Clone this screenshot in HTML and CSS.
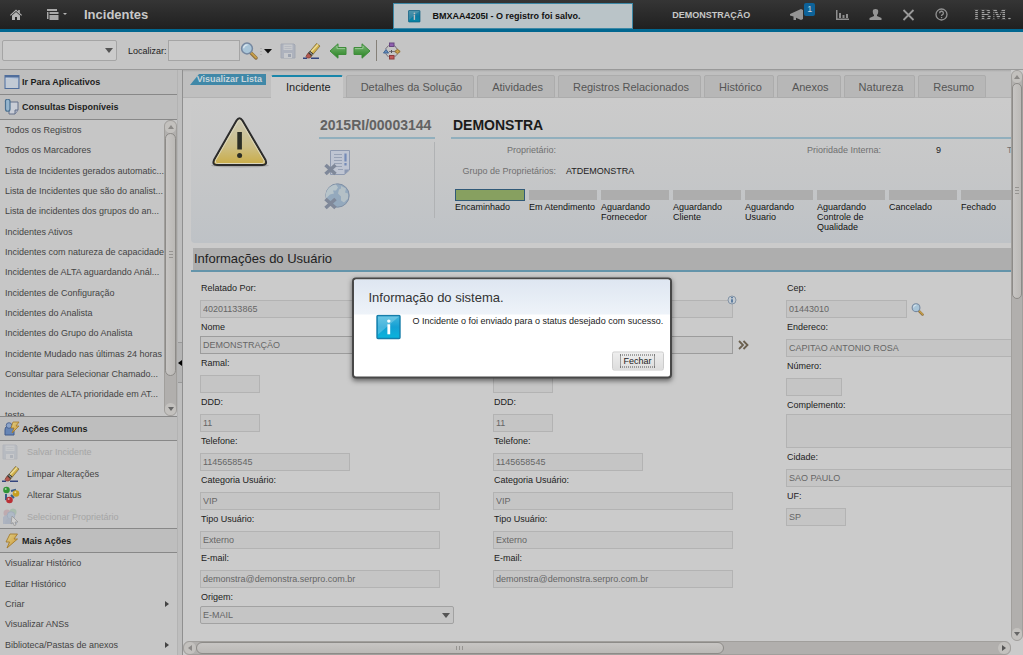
FILE: index.html
```html
<!DOCTYPE html>
<html lang="pt-BR">
<head>
<meta charset="utf-8">
<title>Incidentes</title>
<link rel="stylesheet" href="styles.css">
</head>
<body>
<svg class="defs" aria-hidden="true">
  <defs>
    <linearGradient id="gBlue" x1="0" y1="0" x2="1" y2="1"><stop offset="0" stop-color="#d3dce8"/><stop offset="1" stop-color="#8da6c8"/></linearGradient>
    <linearGradient id="gGreen" x1="0" y1="0" x2="0" y2="1"><stop offset="0" stop-color="#7cb878"/><stop offset="1" stop-color="#27821f"/></linearGradient>
    <linearGradient id="gWarn" x1="0" y1="0" x2="0" y2="1"><stop offset="0" stop-color="#cbc9b8"/><stop offset="0.6" stop-color="#cdbf86"/><stop offset="1" stop-color="#c9ab45"/></linearGradient>
    <linearGradient id="gInfo" x1="0" y1="0" x2="0" y2="1"><stop offset="0" stop-color="#45b8dd"/><stop offset="0.5" stop-color="#14a0d4"/><stop offset="1" stop-color="#08b5dd"/></linearGradient>
    <linearGradient id="gBolt" x1="0" y1="0" x2="1" y2="1"><stop offset="0" stop-color="#ded08a"/><stop offset="1" stop-color="#cf9630"/></linearGradient>
  </defs>
  <symbol id="i-search" viewBox="0 0 18 18">
    <path d="M10.5 10.5l5.5 5.5" stroke="#8c6f3f" stroke-width="3.4" stroke-linecap="round"/>
    <path d="M11 10.6l5 5" stroke="#c9a048" stroke-width="1.8" stroke-linecap="round"/>
    <circle cx="7" cy="6.5" r="5.4" fill="#a9c5d8" stroke="#7688a0" stroke-width="1.5"/>
    <path d="M3.6 6.2a3.6 3.6 0 0 1 4-3.3" stroke="#d9e6ee" stroke-width="1.4" fill="none"/>
  </symbol>
  <symbol id="i-save" viewBox="0 0 16 16">
    <path d="M1 1h13l1 1v13H1z" fill="#a3abba" stroke="#969dab"/>
    <path d="M3.5 1.5h9v5.5h-9z" fill="#c8cbd0"/><path d="M4.5 3.5h7M4.5 5.5h7" stroke="#b0b5be"/>
    <path d="M4 10h8v5H4z" fill="#c9cbd0"/><path d="M8 11h3v3H8z" fill="#8c95a8"/>
  </symbol>
  <symbol id="i-eraser" viewBox="0 0 18 18">
    <path d="M0 16.3h4M8 16.3h8" stroke="#33447d" stroke-width="1.4"/>
    <path d="M3.5 13.5L13.500 1.500l3.500 2.500L7 16z" fill="#d1b04a" stroke="#756330" stroke-width=".7"/>
    <path d="M6 12L15 2.600" stroke="#eadc9b" stroke-width="1.400"/>
    <path d="M7 8.800l3.400 3L8.500 14 5 11z" fill="#333"/><path d="M6.400 10l3.200 2.800" stroke="#c5c5c5"/>
    <path d="M5 11.200l3.200 2.800L6.500 16H4.200L3 14.600z" fill="#b65a52" stroke="#7d3b38" stroke-width=".7"/>
  </symbol>
  <symbol id="i-arrow" viewBox="0 0 18 18">
    <path d="M1 5.5h8V1.8L17 9l-8 7.2v-3.7H1z" fill="url(#gGreen)" stroke="#3f8c3b" stroke-linejoin="round"/>
    <path d="M2 6.6h8V4" stroke="#a6cfa2" stroke-width=".8" fill="none"/>
  </symbol>
  <symbol id="i-bolt" viewBox="0 0 14 16">
    <path d="M5 1h7.500L9 6h3.500L2 15l2.500-6H1z" fill="url(#gBolt)" stroke="#a37a2c" stroke-width=".9" stroke-linejoin="round"/>
  </symbol>
  <symbol id="i-info" viewBox="0 0 26 26">
    <rect x="1" y="1" width="23" height="23" rx="1" fill="url(#gInfo)" stroke="#167daa" stroke-width="1.4"/>
    <path d="M2 2h21L2 20z" fill="#fff" opacity=".22"/>
    <rect x="11.400" y="9.800" width="2.800" height="10" fill="#fff"/><circle cx="12.800" cy="6.600" r="1.700" fill="#fff"/>
  </symbol>
</svg>

<header class="topbar">
  <button class="icon-btn" aria-label="Início"><svg width="12" height="12" viewBox="0 0 12 12"><path d="M0 6l6-5.500L8.200 2.500V1h1.600v3L12 6l-.7.700L6 2 .7 6.700z" fill="#b5b5b5"/><path d="M2 6.500l4-3.600 4 3.600V11H7V8H5v3H2z" fill="#b5b5b5"/></svg></button>
  <button class="icon-btn menu-btn" aria-label="Ir para"><svg width="21" height="12" viewBox="0 0 21 12"><path d="M0 0h10v2H0zM0 3h1.500v7H0zM2.500 3h9v2h-9zM2.500 6h9v5h-9z" fill="#a9a9a9"/><path d="M16 4h4l-2 2z" fill="#b5b5b5"/></svg></button>
  <h1 class="app-title">Incidentes</h1>
  <div class="topbar-right">
    <span class="user-name">DEMONSTRAÇÃO</span>
    <button class="icon-btn bulletin" aria-label="Boletins"><svg width="14" height="12" viewBox="0 0 14 12"><path d="M0 5l11-5 2 1v9l-2 1-5-2.300V11H3.500V7.500L0 6.500z" fill="#949494"/></svg><span class="badge">1</span></button>
    <button class="icon-btn" aria-label="Relatórios"><svg width="13" height="12" viewBox="0 0 13 12"><path d="M0 1h1.500v8.500H13V11H0z" fill="#8e8e8e"/><path d="M3 4h2v5H3zM6.500 6h2v3h-2zM10 5h2v4h-2z" fill="#8e8e8e"/></svg></button>
    <button class="icon-btn" aria-label="Perfil"><svg width="13" height="12" viewBox="0 0 13 12"><path d="M6.500 0a2.700 2.700 0 0 1 2.700 3C9 5 8.500 5.500 8 6v1l4.500 2v2H.5V9L5 7V6C4.500 5.500 4 5 3.800 3A2.700 2.700 0 0 1 6.500 0z" fill="#949494"/></svg></button>
    <button class="icon-btn" aria-label="Sair"><svg width="13" height="12" viewBox="0 0 13 12"><path d="M1.500 1l10 10M11.500 1l-10 10" stroke="#9a9a9a" stroke-width="1.800"/></svg></button>
    <button class="icon-btn" aria-label="Ajuda"><svg width="13" height="13" viewBox="0 0 13 13"><circle cx="6.500" cy="6.500" r="5.500" fill="none" stroke="#929292" stroke-width="1.300"/><path d="M4.600 5.200a1.900 1.900 0 1 1 2.600 1.700q-.7.400-.7 1.100" fill="none" stroke="#929292" stroke-width="1.300"/><path d="M5.900 9h1.300v1.200H5.900z" fill="#929292"/></svg></button>
    <span class="brand">IBM.</span>
  </div>
  <div class="notice" role="status"><svg width="13" height="13"><use href="#i-info"/></svg><span>BMXAA4205I - O registro foi salvo.</span></div>
</header>

<div class="toolbar">
  <select class="query-select" aria-label="Consulta"><option></option></select>
  <label class="find-label" for="find">Localizar:</label>
  <input class="find-input" id="find" type="text">
  <button class="icon-btn" aria-label="Buscar"><svg width="18" height="18"><use href="#i-search"/></svg></button>
  <button class="icon-btn drop" aria-label="Opções de busca"><svg width="12" height="8" viewBox="0 0 12 8"><path d="M1 1v1M1 4v1M1 7v1" stroke="#999"/><path d="M4 2h8L8 6.500z" fill="#111"/></svg></button>
  <button class="icon-btn save" aria-label="Salvar"><svg width="16" height="16"><use href="#i-save"/></svg></button>
  <button class="icon-btn clear" aria-label="Limpar"><svg width="18" height="18"><use href="#i-eraser"/></svg></button>
  <button class="icon-btn back" aria-label="Anterior"><svg width="18" height="18"><use href="#i-arrow"/></svg></button>
  <button class="icon-btn next" aria-label="Próximo"><svg width="18" height="18"><use href="#i-arrow"/></svg></button>
  <span class="divider"></span>
  <button class="icon-btn" aria-label="Rotear fluxo"><svg width="18" height="18" viewBox="0 0 18 18"><path d="M5.500 3.500L2.500 7M11.500 3.500l3 4M2.500 11.500l3 3.500M14.500 12l-3 3M6 9.500h6" fill="none" stroke="#77707a"/><path d="M8.500 8v3" stroke="#555"/><rect x="6.500" y="1" width="4.500" height="3.500" fill="#9060b0" stroke="#674680"/><path d="M3 7.500l2.500 3.500H.5z" fill="#6690bd" stroke="#3f6292"/><path d="M14.500 7.300l2.700 2.200-2.700 2.200-2.700-2.200z" fill="#caa04a" stroke="#8b6c2c"/><rect x="6.500" y="13.500" width="4.500" height="3.500" fill="#c15a5a" stroke="#8c3b3b"/></svg></button>
</div>

<div class="workspace">
  <nav class="sidebar">
    <h2 class="side-head"><svg width="16" height="16" viewBox="0 0 16 16"><rect x="1" y="1.500" width="14" height="13" fill="url(#gBlue)" stroke="#506e9c"/><path d="M1 2.500h14" stroke="#506e9c" stroke-width="2"/><path d="M2 5h12v9H2z" fill="#c1cad5"/></svg>Ir Para Aplicativos</h2>
    <h2 class="side-head"><svg width="16" height="16" viewBox="0 0 16 16"><path d="M5 3h9v8l-3 4H5z" fill="#c9cdd6" stroke="#65708a"/><path d="M14 11h-3v4" fill="#aab2c4" stroke="#65708a"/><path d="M1.500 3a2 2 0 0 1 4.500-1v8a2.200 2.200 0 0 1-4.500 0z" fill="#96b5cd" stroke="#4c7191" stroke-width="1.200"/></svg>Consultas Disponíveis</h2>
    <div class="query-pane">
      <ul class="queries">
        <li><a href="#">Todos os Registros</a></li>
        <li><a href="#">Todos os Marcadores</a></li>
        <li><a href="#">Lista de Incidentes gerados automatic...</a></li>
        <li><a href="#">Lista de Incidentes que são do analist...</a></li>
        <li><a href="#">Lista de incidentes dos grupos do an...</a></li>
        <li><a href="#">Incidentes Ativos</a></li>
        <li><a href="#">Incidentes com natureza de capacidade</a></li>
        <li><a href="#">Incidentes de ALTA aguardando Anál...</a></li>
        <li><a href="#">Incidentes de Configuração</a></li>
        <li><a href="#">Incidentes do Analista</a></li>
        <li><a href="#">Incidentes do Grupo do Analista</a></li>
        <li><a href="#">Incidente Mudado nas últimas 24 horas</a></li>
        <li><a href="#">Consultar para Selecionar Chamado...</a></li>
        <li><a href="#">Incidentes de ALTA prioridade em AT...</a></li>
        <li><a href="#">teste</a></li>
      </ul>
      <div class="vscroll">
        <span class="cap up"></span><span class="thumb side-thumb"><i class="grip"></i></span><span class="track"></span><span class="cap down"></span>
      </div>
    </div>
    <h2 class="side-head ruled"><svg width="16" height="16" viewBox="0 0 16 16"><path d="M1 9c0-3 2-4 3-4h3c2 0 3 2 3 4v5H1z" fill="#6685b5" stroke="#415b8a"/><circle cx="5" cy="4.500" r="2.800" fill="#8ba3c8" stroke="#415b8a" stroke-width=".8"/><path d="M9 1h6l-3 4h3l-7 7 2-5H7z" fill="url(#gBolt)" stroke="#a37a2c" stroke-width=".8"/></svg>Ações Comuns</h2>
    <ul class="actions">
      <li class="off"><svg class="faded" width="16" height="16"><use href="#i-save"/></svg><span>Salvar Incidente</span></li>
      <li><svg width="18" height="18"><use href="#i-eraser"/></svg><a href="#">Limpar Alterações</a></li>
      <li><svg width="18" height="18" viewBox="0 0 18 18"><path d="M4 8v5l4-1M9 5l4-1 1 5M9 9l3 3" stroke="#385d88" stroke-width="2" fill="none"/><circle cx="4.500" cy="4" r="3.300" fill="#2f9435"/><circle cx="14" cy="7.500" r="3.300" fill="#c69e20"/><circle cx="7.500" cy="14" r="3.300" fill="#ba2f35"/><circle cx="3.700" cy="3" r="1" fill="#a9d1a8"/><circle cx="13.300" cy="6.300" r="1" fill="#e8dba0"/><circle cx="6.600" cy="13" r="1" fill="#e0a3a3"/></svg><a href="#">Alterar Status</a></li>
      <li class="off"><svg class="faded" width="18" height="18" viewBox="0 0 18 18"><circle cx="5" cy="5" r="3.500" fill="#b5858f"/><circle cx="11" cy="4" r="3.500" fill="#7fae8c"/><path d="M1 16V9q4-4 8 0v7z" fill="#8b9bb9"/><circle cx="9" cy="7.500" r="3.800" fill="#8ea7c8" stroke="#6e88ad"/><path d="M3 16q0-6 6-6t6 6z" fill="#8193b4"/><path d="M10 8l6 6h-3l1 3-2 .5-1-3-2 1.500z" fill="#ddd" stroke="#555" stroke-width=".8"/></svg><span>Selecionar Proprietário</span></li>
    </ul>
    <h2 class="side-head ruled"><svg width="16" height="16"><use href="#i-bolt"/></svg>Mais Ações</h2>
    <ul class="more">
      <li><a href="#">Visualizar Histórico</a></li>
      <li><a href="#">Editar Histórico</a></li>
      <li class="sub"><a href="#">Criar</a></li>
      <li><a href="#">Visualizar ANSs</a></li>
      <li class="sub"><a href="#">Biblioteca/Pastas de anexos</a></li>
    </ul>
  </nav>

  <div class="splitter"><button class="collapse" aria-label="Recolher"></button></div>

  <main class="main">
    <div class="view">
      <div class="tabs">
        <a class="list-link" href="#">Visualizar Lista</a>
        <button class="tab active">Incidente</button>
        <button class="tab">Detalhes da Solução</button>
        <button class="tab">Atividades</button>
        <button class="tab">Registros Relacionados</button>
        <button class="tab">Histórico</button>
        <button class="tab">Anexos</button>
        <button class="tab">Natureza</button>
        <button class="tab">Resumo</button>
      </div>
      <div class="content">
        <section class="summary">
          <svg class="warning" width="58" height="52" viewBox="0 0 58 52"><ellipse cx="29" cy="48.500" rx="29" ry="2" fill="#999" opacity=".7"/><path d="M25.500 3.500Q28.500-1 31.500 3.500L54.500 43q2 5-3 5H6q-5 0-3-5z" fill="url(#gWarn)" stroke="#2c2c2c" stroke-width="2"/><path d="M27 4.500Q28.500 2 30 4.500L53 43.500q1 3-2 3H6.500q-3 0-2-3z" fill="none" stroke="#dbd6bd" stroke-width="1"/><path d="M26.300 15h4.600v17.500h-4.600z" fill="#2b2e26"/><circle cx="28.600" cy="38.500" r="2.500" fill="#2b2e26"/></svg>
          <div class="ticket">
            <h2 class="ticket-id">2015RI/00003144</h2>
            <div class="ticket-icons">
              <svg width="28" height="28" viewBox="0 0 28 28"><path d="M6.500 2.500h19V22l-5 4.500h-14z" fill="#bfc5d2" stroke="#8f9ab0"/><path d="M10 6.500h8M10 9.500h8M10 12.500h8M10 15.500h8M11 18.500h7M14 21.500h5" stroke="#98a2b5"/><path d="M21.500 5.500v8M21.500 15v2.500" stroke="#758bb8" stroke-width="2.200"/><path d="M25.500 21.500h-5v5z" fill="#8b98b1"/><path d="M1.500 17l10 9M11.500 17l-10 9" stroke="#7f8899" stroke-width="3.600"/></svg>
              <svg width="28" height="28" viewBox="0 0 28 28"><circle cx="13.500" cy="13.500" r="11.700" fill="#94a9bd" stroke="#8090a5"/><path d="M4 7q3-4 8-4.500l2 3-2 3-3 0 1 3-4 1-4 4q-1-6 2-9.500z" fill="#b7c4ca"/><path d="M17 4l5 2.500-1 4 3 1v5l-4 4-3-2v-4l-3-3 1-4 2-1z" fill="#b4c0c6"/><path d="M1.500 17l10 9M11.500 17l-10 9" stroke="#7f8899" stroke-width="3.600"/></svg>
            </div>
          </div>
          <div class="details">
            <h2 class="ticket-title">DEMONSTRA</h2>
            <dl class="facts">
              <dt>Proprietário:</dt><dd></dd><dt class="priority">Prioridade Interna:</dt><dd class="num">9</dd><dt class="type">Tipo:</dt>
              <dt class="second">Grupo de Proprietários:</dt><dd>ATDEMONSTRA</dd>
            </dl>
            <ol class="steps">
              <li class="current">Encaminhado</li>
              <li>Em Atendimento</li>
              <li>Aguardando Fornecedor</li>
              <li>Aguardando Cliente</li>
              <li>Aguardando Usuario</li>
              <li>Aguardando Controle de Qualidade</li>
              <li>Cancelado</li>
              <li>Fechado</li>
            </ol>
          </div>
        </section>

        <h2 class="section-title"><span>Informações do Usuário</span></h2>
        <form class="form">
          <div class="col">
            <div class="field"><label for="a1">Relatado Por:</label><input id="a1" class="w-l" value="40201133865" readonly></div>
            <div class="field tight"><label for="a2">Nome</label><input id="a2" class="w-l strong" value="DEMONSTRAÇÃO" readonly></div>
            <div class="field"><label for="a3">Ramal:</label><input id="a3" class="w-s" readonly></div>
            <div class="field"><label for="a4">DDD:</label><input id="a4" class="w-s" value="11" readonly></div>
            <div class="field"><label for="a5">Telefone:</label><input id="a5" class="w-m" value="1145658545" readonly></div>
            <div class="field"><label for="a6">Categoria Usuário:</label><input id="a6" class="w-l" value="VIP" readonly></div>
            <div class="field"><label for="a7">Tipo Usuário:</label><input id="a7" class="w-l" value="Externo" readonly></div>
            <div class="field"><label for="a8">E-mail:</label><input id="a8" class="w-l" value="demonstra@demonstra.serpro.com.br" readonly></div>
            <div class="field tight"><label for="a9">Origem:</label><select id="a9" class="origin"><option>E-MAIL</option></select></div>
          </div>
          <div class="col">
            <div class="field bare"><div class="with-icon"><input class="w-l" aria-label="Usuário" readonly><svg class="hint" width="10" height="10" viewBox="0 0 10 10"><circle cx="5" cy="5" r="4" fill="#c4cbd2" stroke="#8494a6"/><path d="M5 4.200v3.300M5 2v1.200" stroke="#3c6691" stroke-width="1.500"/></svg></div></div>
            <div class="field tight bare"><div class="with-icon"><input class="w-l strong" aria-label="Nome" readonly><svg class="detail" width="11" height="10" viewBox="0 0 11 10"><path d="M1 1l4 4-4 4M5.500 1l4 4-4 4" fill="none" stroke="#6b604e" stroke-width="1.800"/></svg></div></div>
            <div class="field bare"><input class="w-s" aria-label="Ramal" readonly></div>
            <div class="field"><label for="b4">DDD:</label><input id="b4" class="w-s" value="11" readonly></div>
            <div class="field"><label for="b5">Telefone:</label><input id="b5" class="w-m" value="1145658545" readonly></div>
            <div class="field"><label for="b6">Categoria Usuário:</label><input id="b6" class="w-l" value="VIP" readonly></div>
            <div class="field"><label for="b7">Tipo Usuário:</label><input id="b7" class="w-l" value="Externo" readonly></div>
            <div class="field"><label for="b8">E-mail:</label><input id="b8" class="w-l" value="demonstra@demonstra.serpro.com.br" readonly></div>
          </div>
          <div class="col">
            <div class="field"><label for="c1">Cep:</label><div class="with-icon"><input id="c1" class="w-cep" value="01443010" readonly><svg class="lookup" width="13" height="13"><use href="#i-search"/></svg></div></div>
            <div class="field"><label for="c2">Endereco:</label><input id="c2" class="w-full" value="CAPITAO ANTONIO ROSA" readonly></div>
            <div class="field"><label for="c3">Número:</label><input id="c3" class="w-xs" readonly></div>
            <div class="field tight"><label for="c4">Complemento:</label><textarea id="c4" class="w-full" readonly></textarea></div>
            <div class="field"><label for="c5">Cidade:</label><input id="c5" class="w-full" value="SAO PAULO" readonly></div>
            <div class="field"><label for="c6">UF:</label><input id="c6" class="w-s" value="SP" readonly></div>
          </div>
        </form>
      </div>
      <div class="hscroll">
        <span class="cap left"></span><span class="thumb"><i class="grip"></i></span><span class="track"></span><span class="cap right"></span>
      </div>
    </div>
    <div class="vscroll main-scroll">
      <span class="cap up"></span><span class="thumb main-thumb"><i class="grip"></i></span><span class="track"></span><span class="cap down"></span>
    </div>
  </main>
</div>

<div class="dialog" role="dialog" aria-labelledby="dlg-title">
  <h2 class="dialog-title" id="dlg-title">Informação do sistema.</h2>
  <div class="dialog-body"><svg width="26" height="26"><use href="#i-info"/></svg><p>O Incidente o foi enviado para o status desejado com sucesso.</p></div>
  <div class="dialog-foot"><button class="close-btn"><span>Fechar</span></button></div>
</div>
</body>
</html>
```

FILE: styles.css
```css
*, *::before, *::after { box-sizing: border-box; }

body {
  margin: 0;
  height: 100vh;
  display: flex;
  flex-direction: column;
  overflow: hidden;
  position: relative;
  background: #cbcbcb;
  color: #222;
  font: 9px/12px "Liberation Sans", Arial, sans-serif;
}

h1, h2, p, ul, ol, dl, dd { margin: 0; padding: 0; }
ul, ol { list-style: none; }
a { color: inherit; text-decoration: none; }
button, input, select, textarea { font: inherit; color: inherit; margin: 0; border-radius: 0; }
svg { display: block; flex: none; }
.defs { position: absolute; width: 0; height: 0; }

.icon-btn { display: flex; border: 0; padding: 0; background: none; flex: none; }

/* Top bar */
.topbar {
  flex: none;
  position: relative;
  display: flex;
  align-items: center;
  height: 32px;
  padding: 0 11px 0 10px;
  background: linear-gradient(#353535, #202020);
  border-bottom: 3px solid #016790;
}
.menu-btn { margin-left: 25px; }
.app-title { margin-left: 16px; font-size: 13px; line-height: 16px; color: #c8c8c8; }
.topbar-right { margin-left: auto; display: flex; align-items: center; gap: 20px; }
.user-name { font-weight: bold; color: #c8c8c8; margin-right: 20px; }
.bulletin { position: relative; margin-right: 12px; }
.badge {
  position: absolute; left: 14px; top: -6px;
  width: 11px; height: 13px; border-radius: 2px;
  background: #0d6299; color: #c8d4dd; text-align: center;
}
.brand {
  margin-left: 5px;
  font: bold 14px/14px "DejaVu Serif", serif;
  color: transparent;
  background: repeating-linear-gradient(#a0a0a0 0 1px, #3c3c3c 1px 2px);
  -webkit-background-clip: text;
  background-clip: text;
}
.notice {
  position: absolute; left: 50%; top: 3px; transform: translateX(-50%);
  width: 240px; height: 26px;
  display: flex; align-items: center; gap: 12px;
  padding-left: 14px;
  margin-left: 1px;
  background: #bac4c8; border: 1px solid #3c88a6;
  color: #111; font-weight: bold;
}
.notice svg { filter: brightness(0.75); }

/* Toolbar */
.toolbar {
  flex: none;
  display: flex; align-items: center;
  height: 38px; padding: 0 2px;
  background: #c5c5c5; border-bottom: 1px solid #999;
}
.query-select, .field .origin {
  appearance: none;
  background: #cbcbcb url("data:image/svg+xml,%3Csvg xmlns='http://www.w3.org/2000/svg' width='8' height='5'%3E%3Cpath d='M0 0h8L4 5z' fill='%23555'/%3E%3C/svg%3E") no-repeat right 3px center;
  border: 1px solid #a5a5a5; border-radius: 2px;
}
.query-select { width: 115px; height: 21px; }
.find-label { margin-left: 11px; color: #222; }
.find-input { width: 72px; height: 21px; margin-left: 1px; border: 1px solid #a5a5a5; background: #cbcbcb; }
.drop { margin-left: 2px; }
.save { margin-left: 8px; opacity: 0.7; }
.clear { margin-left: 7px; }
.back { margin-left: 8px; transform: scaleX(-1); }
.next { margin-left: 6px; }
.divider { width: 1px; height: 21px; margin: 0 6px 0 5px; background: #858078; }

.workspace { flex: 1; min-height: 0; display: flex; }

/* Sidebar */
.sidebar { flex: none; width: 177px; display: flex; flex-direction: column; background: #c6c6c6; }
.side-head {
  flex: none; height: 25px; padding-left: 4px;
  display: flex; align-items: center; gap: 2px;
  font-size: 9px; line-height: 12px; color: #1d1d1d;
  background: #bebebe; border-bottom: 1px solid #888;
}
.side-head.ruled { border-top: 1px solid #888; }
.sidebar a { color: #444; }
.query-pane { flex: 1; min-height: 0; display: flex; overflow: hidden; }
.queries { flex: 1; min-width: 0; height: 305px; display: flex; flex-direction: column; padding-left: 5px; white-space: nowrap; }
.queries li { flex: 1; display: flex; align-items: center; }
.actions { flex: none; height: 87px; display: flex; flex-direction: column; padding-left: 2px; }
.actions li { flex: 1; display: flex; align-items: center; }
.actions svg { margin-right: 7px; }
.actions svg[width="16"] { margin-right: 9px; }
.faded { opacity: 0.4; }
.off { color: #a5a5a5; }
.more { flex: none; height: 102px; display: flex; flex-direction: column; padding: 0 8px 0 5px; }
.more li { flex: 1; display: flex; align-items: center; justify-content: space-between; }
.sub::after { content: ""; border: 3px solid transparent; border-left: 4px solid #444; border-right: 0; }

.splitter { flex: none; width: 6px; display: flex; align-items: center; background: #bebebe; border-right: 1px solid #909090; border-left: 1px solid #b3b3b3; }
.collapse {
  width: 5px; height: 41px; padding: 0; display: flex; align-items: center;
  background: #b4b4b4; border: 1px solid #999; border-width: 1px 0;
}
.collapse::before { content: ""; border: 3px solid transparent; border-right: 4px solid #000; border-left: 0; }

/* Scroll bars */
.vscroll, .hscroll { flex: none; display: flex; background: #b1afad; border: 1px solid #a19f9c; border-radius: 6px; }
.vscroll { width: 13px; flex-direction: column; }
.hscroll { height: 14px; }
.cap { flex: none; display: flex; align-items: center; justify-content: center; background: #c3c1be; border-radius: 6px; width: 12px; height: 12px; }
.cap::before { content: ""; border: 3px solid transparent; }
.up::before { border-bottom: 4px solid #8b8987; border-top: 0; }
.down::before { border-top: 4px solid #666; border-bottom: 0; }
.left::before { border-right: 4px solid #8b8987; border-left: 0; }
.right::before { border-left: 4px solid #555; border-right: 0; }
.vscroll .cap { width: 11px; }
.track { flex: 1; }
.thumb { display: flex; align-items: center; justify-content: center; background: linear-gradient(90deg, #c7c5c3, #bbb9b6); border: 1px solid #8d8b88; border-radius: 6px; }
.side-thumb { height: 243px; }
.main-thumb { height: 216px; }
.hscroll .thumb { flex: 0 0 528px; background: linear-gradient(#c7c5c3, #bbb9b6); }
.grip { width: 4px; height: 8px; background: repeating-linear-gradient(#969491 0 1px, transparent 1px 3px); }
.hscroll .grip { width: 8px; height: 4px; background: repeating-linear-gradient(90deg, #969491 0 1px, transparent 1px 3px); }
.main-scroll { width: 12px; margin-bottom: 14px; }
.main-scroll .cap { width: 10px; }

/* Main view */
.main { flex: 1; min-width: 0; display: flex; }
.view { flex: 1; min-width: 0; display: flex; flex-direction: column; }
.tabs { flex: none; height: 28px; display: flex; align-items: flex-end; gap: 3px; padding: 4px 0 0 7px; background: linear-gradient(#aaa, #bfbfbf 2px); box-shadow: inset 0 -1px #b2b2b2; overflow: hidden; }
.list-link {
  align-self: flex-start; height: 11px; width: 76px; margin-right: 2px; padding-right: 4px;
  background: #4088a8; color: #c9d5db; font-weight: bold; line-height: 11px; text-align: right;
  white-space: nowrap;
  clip-path: polygon(9px 0, 100% 0, 100% 100%, 0 100%);
}
.tab {
  flex: none; height: 23px; padding: 0 11px 0 14px;
  background: #b7b7b7; border: 1px solid #acacac; border-radius: 2px 2px 0 0;
  font-size: 11px; line-height: 14px; color: #555; white-space: nowrap;
}
.tab.active { background: #cbcbcb; border-color: #cbcbcb; border-top: 2px solid #1986aa; color: #222; }

.content { flex: 1; min-height: 0; overflow: hidden; padding: 2px 0 0 8px; background: #cbcbcb; }
.summary {
  display: flex; height: 143px; padding: 17px 0 0 20px; overflow: hidden;
  background: linear-gradient(#cbcbcb, #c6c7c8 50%, #bec2c6); border-radius: 0 0 0 4px;
}
.ticket { flex: none; width: 116px; margin-left: 50px; }
.ticket-id, .ticket-title {
  height: 22px; font-size: 14px; line-height: 16px; white-space: nowrap;
  border-bottom: 2px solid #91afbd;
}
.ticket-id { color: #626262; padding-left: 1px; }
.ticket-title { color: #1b1b1b; padding-left: 2px; }
.ticket-icons { margin-top: 3px; height: 76px; padding: 6px 5px; display: flex; flex-direction: column; gap: 6px; border-right: 1px solid #b0b2b4; }
.details { flex: none; width: 900px; margin-left: 16px; }
.facts { display: grid; grid-template-columns: 105px 251px 72px 62px 100px; row-gap: 9px; padding-top: 5px; color: #707070; }
.facts dt { text-align: right; white-space: nowrap; }
.facts dd { padding-left: 10px; color: #222; }
.facts .priority, .facts .type { text-align: left; }
.facts .num { padding-left: 0; text-align: right; }
.facts .type { padding-left: 66px; }
.facts .second { grid-column: 1; }
.steps { display: flex; gap: 4px; padding: 12px 0 0 4px; line-height: 10px; color: #111; }
.steps li { width: 68px; }
.steps li::before { content: ""; display: block; height: 10px; margin: 1px 0 2px; background: #adadad; }
.steps .current { width: 70px; }
.steps .current::before { height: 12px; margin: 0 0 1px; background: #87a060; border: 1px solid #315a78; }

.section-title { margin-top: 5px; padding-left: 2px; border-bottom: 2px solid #6494aa; font: 13px/22px "Liberation Sans", Arial, sans-serif; }
.section-title span { display: block; padding-left: 1px; background: #aeaeae; color: #222; }

.form { display: grid; grid-template-columns: 293px 293px 293px; padding: 10px 0 0 9px; }
.col { display: flex; flex-direction: column; gap: 3px; }
.field { display: flex; flex-direction: column; align-items: flex-start; gap: 6px; }
.field.tight { gap: 3px; }
.field.bare { padding-top: 18px; }
.field.tight.bare { padding-top: 15px; }
.field label { padding-left: 1px; color: #222; }
.field input, .field textarea, .field .origin {
  display: block; height: 18px; padding: 0 2px;
  background-color: #c5c5c5; border: 1px solid #b3b3b3; color: #666; outline: 0;
}
.field textarea { height: 34px; resize: none; }
.field .strong { border-color: #9c9c9c; }
.field .origin { width: 254px; border-color: #a2a2a2; }
.w-xs { width: 56px; }
.w-s { width: 60px; }
.w-m { width: 150px; }
.w-l { width: 240px; }
.w-cep { width: 121px; }
.w-full { width: 100%; }
.with-icon { display: flex; align-items: center; position: relative; }
.hint { position: absolute; right: -4px; top: -5px; }
.detail { margin-left: 5px; }
.lookup { margin-left: 4px; }

/* Dialog */
.dialog {
  position: absolute; left: 50%; top: 50%; transform: translate(-50%, -50%);
  width: 320px; padding-bottom: 6px;
  background: #fff; border: 2px solid #484848; border-radius: 4px;
  box-shadow: 0 2px 5px rgba(0, 0, 0, 0.5);
}
.dialog-title { padding: 9px 15px; font: 13px/17px "Liberation Sans", Arial, sans-serif; color: #333; background: linear-gradient(#dee6f1, #eef3f9); border-radius: 2px 2px 0 0; }
.dialog-body { display: flex; gap: 11px; padding-left: 22px; }
.dialog-body p { white-space: nowrap; color: #222; }
.dialog-foot { display: flex; justify-content: flex-end; padding: 11px 6px 0; }
.close-btn { width: 52px; height: 19px; padding: 0; display: flex; align-items: center; justify-content: center; background: linear-gradient(#eee, #ddd); border: 1px solid #ccc; border-radius: 2px; color: #222; }
.close-btn span { padding: 0 2px; border: 1px dotted #555; line-height: 11px; }
```
